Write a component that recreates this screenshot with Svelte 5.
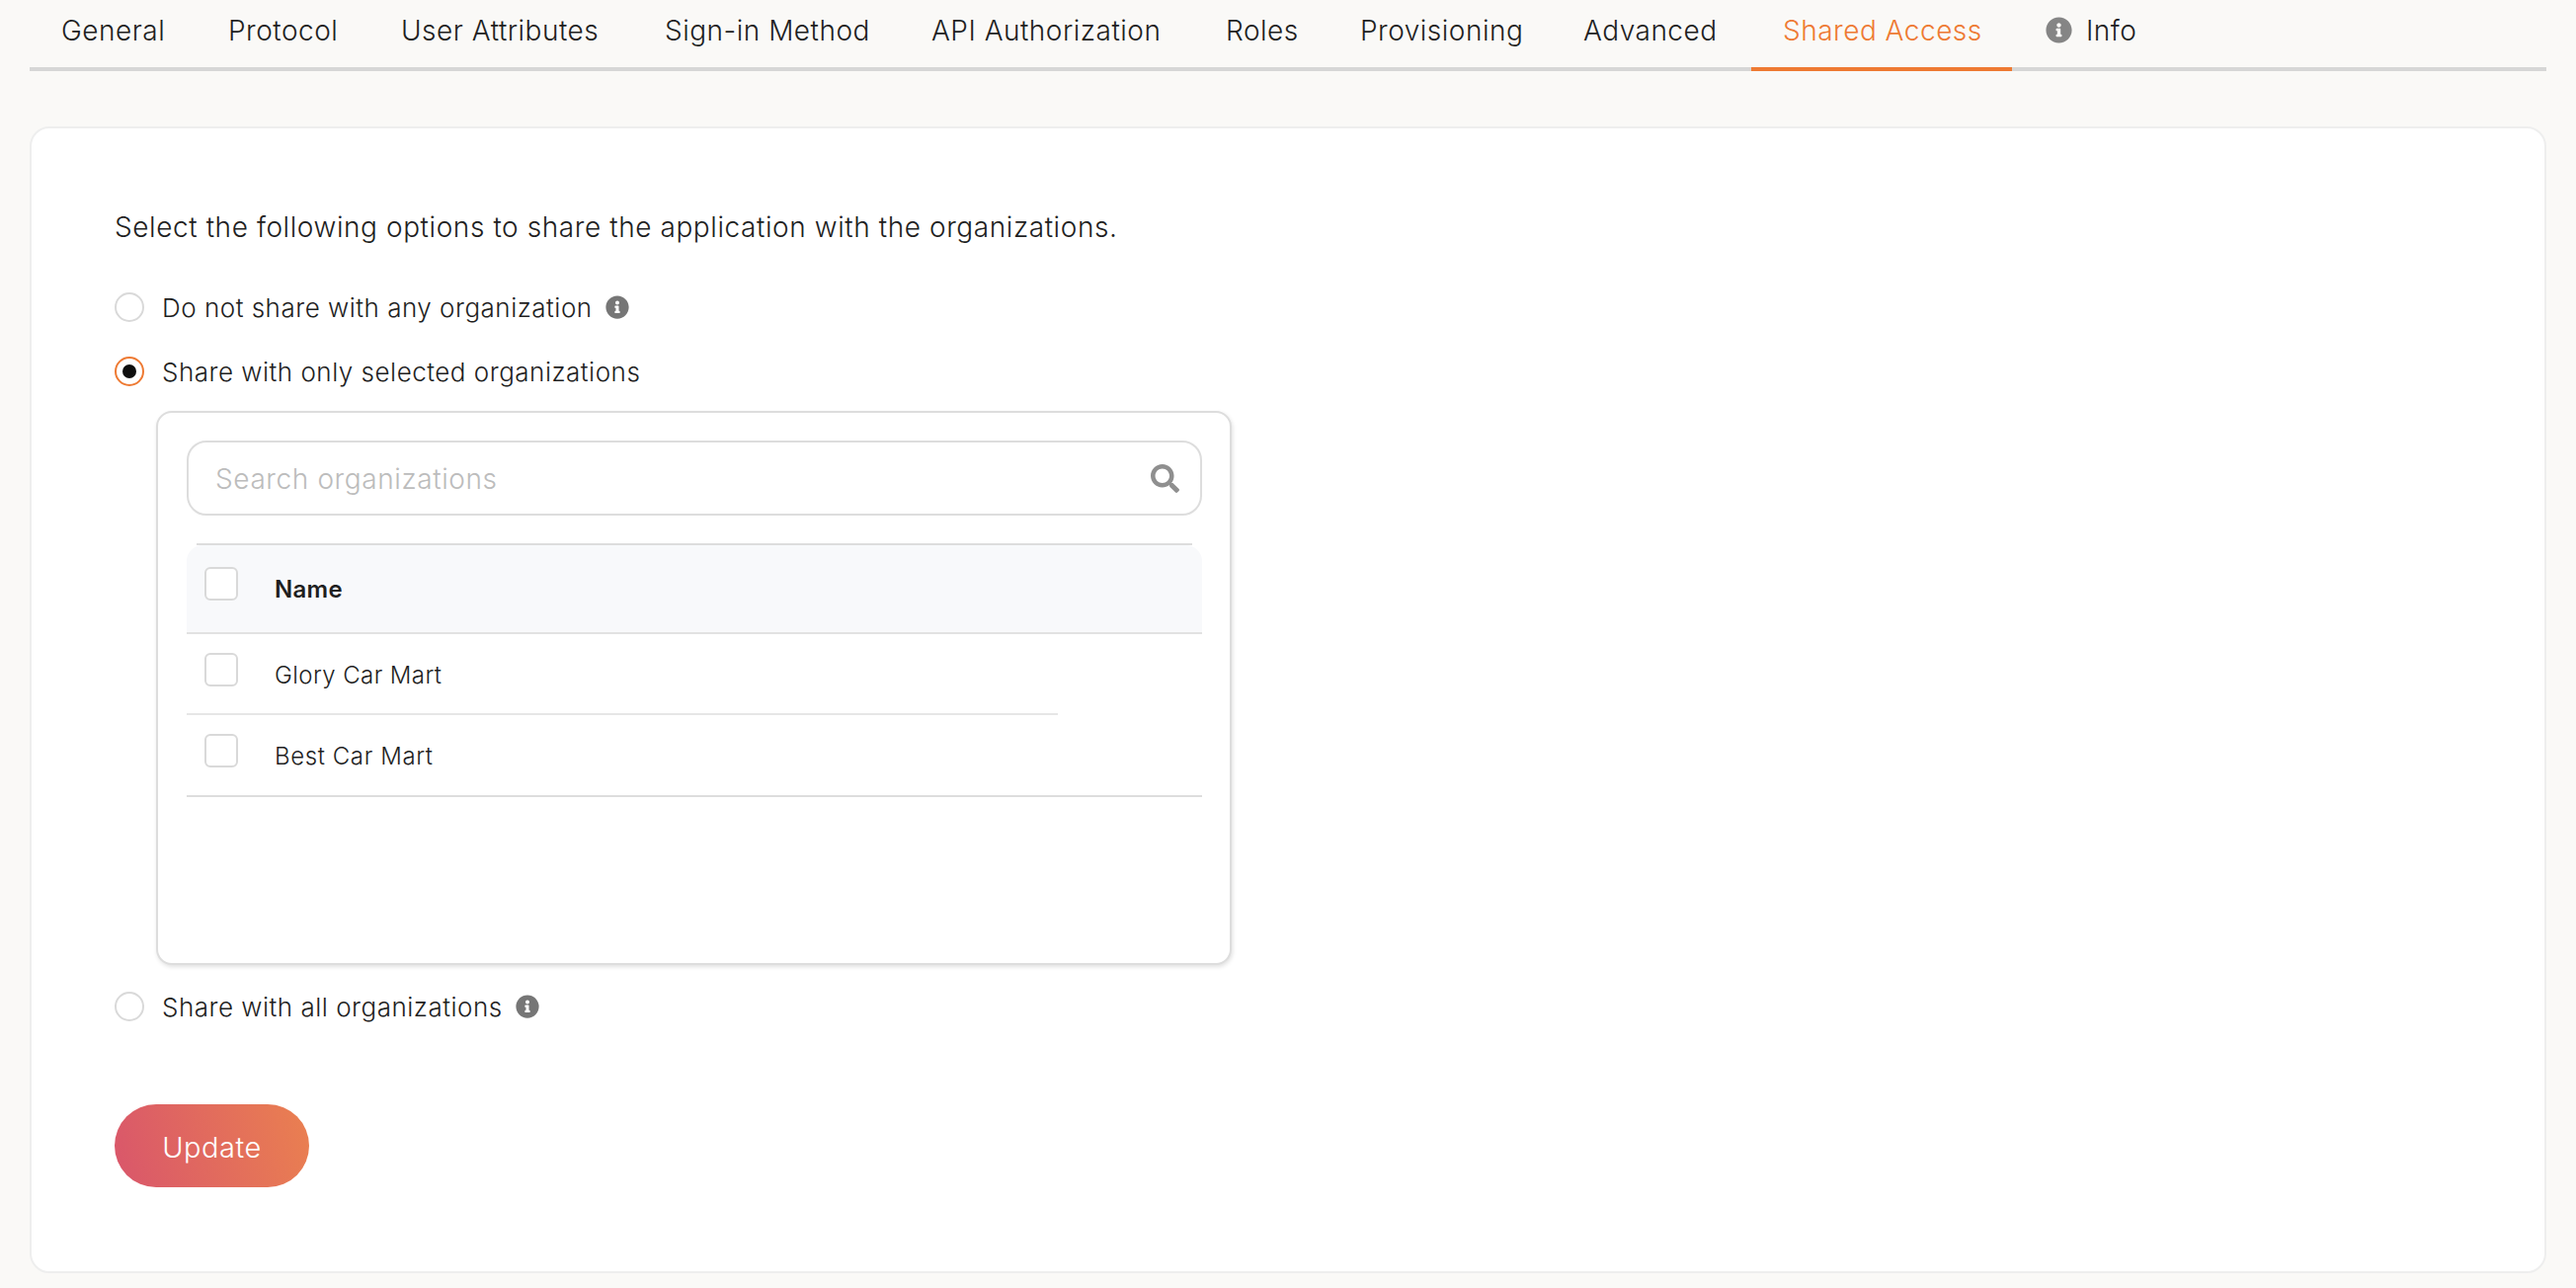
<script>
  const tabs = [
    { label: 'General', width: 169 },
    { label: 'Protocol', width: 175 },
    { label: 'User Attributes', width: 267 },
    { label: 'Sign-in Method', width: 270 },
    { label: 'API Authorization', width: 298 },
    { label: 'Roles', width: 136 },
    { label: 'Provisioning', width: 226 },
    { label: 'Advanced', width: 202 },
    { label: 'Shared Access', width: 264, active: true },
    { label: 'Info', width: 200, icon: true }
  ];
  const infoPath = 'M256 8C119.043 8 8 119.083 8 256c0 136.997 111.043 248 248 248s248-111.003 248-248C504 119.083 392.957 8 256 8zm0 110c23.196 0 42 18.804 42 42s-18.804 42-42 42-42-18.804-42-42 18.804-42 42-42zm56 254c0 6.627-5.373 12-12 12h-88c-6.627 0-12-5.373-12-12v-24c0-6.627 5.373-12 12-12h12v-64h-12c-6.627 0-12-5.373-12-12v-24c0-6.627 5.373-12 12-12h64c6.627 0 12 5.373 12 12v100h12c6.627 0 12 5.373 12 12v24z';
  const searchPath = 'M505 442.7L405.3 343c-4.5-4.5-10.6-7-17-7H372c27.6-35.3 44-79.7 44-128C416 93.1 322.9 0 208 0S0 93.1 0 208s93.1 208 208 208c48.3 0 92.7-16.4 128-44v16.3c0 6.4 2.5 12.5 7 17l99.7 99.7c9.4 9.4 24.6 9.4 33.9 0l28.3-28.3c9.4-9.4 9.4-24.6.1-34zM208 336c-70.7 0-128-57.2-128-128 0-70.7 57.2-128 128-128 70.7 0 128 57.2 128 128 0 70.7-57.2 128-128 128z';
</script>

<div class="page">
  <nav class="tabs">
    {#each tabs as tab}
      <div class="tab" class:active={tab.active} style="width: {tab.width}px">
        {#if tab.icon}
          <svg class="tab-icon" viewBox="0 0 512 512"><path d={infoPath} /></svg>
        {/if}
        <span>{tab.label}</span>
      </div>
    {/each}
  </nav>

  <section class="card">
    <p class="intro">Select the following options to share the application with the organizations.</p>

    <div class="option first">
      <span class="radio"></span>
      <span class="label">Do not share with any organization</span>
      <svg class="hint" viewBox="0 0 512 512"><path d={infoPath} /></svg>
    </div>

    <div class="option second">
      <span class="radio checked"></span>
      <span class="label">Share with only selected organizations</span>
    </div>

    <div class="panel">
      <div class="search">
        <span class="placeholder">Search organizations</span>
        <svg class="search-icon" viewBox="0 0 512 512"><path d={searchPath} /></svg>
      </div>

      <div class="table">
        <div class="head-rule"></div>
        <div class="row head">
          <span class="check"></span>
          <span class="name">Name</span>
        </div>
        <div class="row one">
          <span class="check"></span>
          <span class="name">Glory Car Mart</span>
          <span class="short-rule"></span>
        </div>
        <div class="row two">
          <span class="check"></span>
          <span class="name">Best Car Mart</span>
        </div>
      </div>
    </div>

    <div class="option third">
      <span class="radio"></span>
      <span class="label">Share with all organizations</span>
      <svg class="hint" viewBox="0 0 512 512"><path d={infoPath} /></svg>
    </div>

    <button class="update">Update</button>
  </section>
</div>

<style>
  :global(body) {
    margin: 0;
    background: #faf9f7;
  }

  .page {
    padding: 0 30px 15px;
    font-family: Inter, "Noto Sans", sans-serif;
    font-weight: 300;
    color: #1f1f1f;
  }

  .tabs {
    display: flex;
    height: 68px;
    border-bottom: 4px solid #d6d6d6;
  }

  .tab {
    position: relative;
    display: flex;
    align-items: center;
    gap: 14px;
    box-sizing: border-box;
    height: 68px;
    padding: 0 0 6px 32px;
    font-size: 28px;
    letter-spacing: 0.5px;
    white-space: nowrap;
  }

  .tab.active {
    color: #ee7a33;
    border-bottom: 4px solid #ee7a33;
    height: 72px;
    padding-bottom: 6px;
  }

  .tab-icon {
    width: 27px;
    height: 27px;
    fill: #858585;
    margin: 0 0 2px 2px;
  }

  .card {
    box-sizing: border-box;
    margin-top: 56px;
    padding: 80px 84px 85px;
    height: 1161px;
    background: #fff;
    border: 2px solid #eeeeee;
    border-radius: 20px;
  }

  .intro {
    margin: 0;
    font-size: 28px;
    line-height: 40px;
    letter-spacing: 0.58px;
  }

  .option {
    display: flex;
    align-items: center;
    height: 30px;
  }

  .first { margin-top: 46px; }
  .second { margin-top: 35px; }
  .third { margin-top: 27px; }

  .radio {
    position: relative;
    box-sizing: border-box;
    flex: none;
    width: 30px;
    height: 30px;
    margin-right: 19px;
    border: 2px solid #d9d9d9;
    border-radius: 50%;
    background: #fff;
  }

  .radio.checked {
    border-color: #ee7a33;
  }

  .radio.checked::after {
    content: "";
    position: absolute;
    top: 6px;
    left: 6px;
    width: 14px;
    height: 14px;
    border-radius: 50%;
    background: #0e0e0e;
  }

  .label {
    font-size: 26px;
    letter-spacing: 0.5px;
    white-space: nowrap;
    margin-left: -1px;
  }

  .hint {
    flex: none;
    width: 24px;
    height: 24px;
    margin-left: 13px;
    fill: #767676;
  }

  .panel {
    box-sizing: border-box;
    width: 1089px;
    height: 561px;
    margin: 25px 0 0 42px;
    padding: 28px 28px 28px 29px;
    background: #fff;
    border: 2px solid #dddddd;
    border-radius: 16px;
    box-shadow: 1px 2px 4px rgba(0, 0, 0, 0.12);
  }

  .search {
    display: flex;
    align-items: center;
    justify-content: space-between;
    box-sizing: border-box;
    height: 76px;
    padding: 0 21px 0 28px;
    border: 2px solid #dddddd;
    border-radius: 20px;
  }

  .placeholder {
    font-size: 28px;
    letter-spacing: 0.6px;
    color: #bcbcbc;
    margin-left: -1px;
    padding-top: 1px;
  }

  .search-icon {
    width: 29px;
    height: 29px;
    fill: #8f8f8f;
  }

  .table {
    margin-top: 28px;
  }

  .head-rule {
    height: 2px;
    margin: 0 10px;
    background: #dddddd;
  }

  .row {
    position: relative;
    display: flex;
    align-items: center;
    box-sizing: border-box;
  }

  .head {
    height: 90px;
    background: #f8f9fb;
    border-bottom: 2px solid #e2e2e2;
    border-radius: 16px 16px 0 0;
  }

  .head .name {
    font-weight: 600;
    letter-spacing: 0.3px;
    padding-top: 1px;
  }

  .one { height: 82px; }

  .two {
    height: 83px;
    border-bottom: 2px solid #dddddd;
  }

  .two .name {
    padding-top: 2px;
    letter-spacing: 0.6px;
  }

  .short-rule {
    position: absolute;
    left: 0;
    bottom: 0;
    width: 882px;
    height: 2px;
    background: #e6e6e6;
  }

  .check {
    box-sizing: border-box;
    flex: none;
    width: 34px;
    height: 34px;
    margin: -10px 37px 0 18px;
    background: #fff;
    border: 2px solid #d9d9d9;
    border-radius: 6px;
  }

  .name {
    font-size: 24px;
    letter-spacing: 0.4px;
  }

  .update {
    display: block;
    width: 197px;
    height: 84px;
    margin-top: 84px;
    padding: 2px 0 0;
    border: none;
    border-radius: 42px;
    background: linear-gradient(75deg, #d9566b, #ea8050);
    color: #fff;
    font-family: inherit;
    font-weight: 300;
    font-size: 29px;
    letter-spacing: 0.5px;
  }
</style>
